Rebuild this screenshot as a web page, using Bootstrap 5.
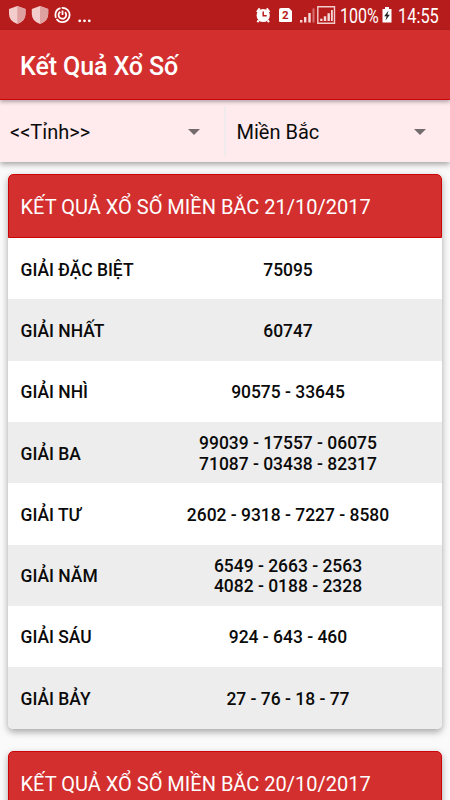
<!DOCTYPE html>
<html lang="vi">
<head>
<meta charset="utf-8">
<meta name="viewport" content="width=device-width, initial-scale=1">
<title>Kết Quả Xổ Số</title>
<link href="https://cdn.jsdelivr.net/npm/bootstrap@5.3.0/dist/css/bootstrap.min.css" rel="stylesheet">
<style>
body{font-family:Roboto,"Noto Sans",sans-serif;background:#fafafa;color:#0a0a0a;height:800px;overflow:hidden}
.status{height:30px;background:#b71c1c;font-size:19.3px;line-height:30px;padding-left:8px;padding-right:11px}
.status svg{display:block;flex:none}
.pct,.batt,.time{flex:none;white-space:nowrap}
.pct{width:40px}
.batt{margin:0 6px 0 2px}
.time{width:41px}
.pct span,.time span{display:block;transform-origin:left center;transform:scaleX(.85);padding-top:3px}
.pct span{transform:scaleX(.83)}
.appbar{height:70px;background:#d32f2f;border-bottom:1px solid #cc0508;padding:4px 20px 0;font-size:25px;font-weight:500;letter-spacing:-.1px;box-shadow:0 2px 4px rgba(0,0,0,.3);position:relative;z-index:2}
.filters{height:62px;background:#ffebee;box-shadow:0 2px 6px rgba(0,0,0,.38);position:relative;z-index:1;font-size:20px}
.filter-a{width:224px;padding:2px 24px 0 10px}
.filter-b{padding:2px 24px 0 10.5px}
.split{width:2px;background:#f1eaec;margin:6px 0}
.result{margin:0 8px 22.4px;border:0;border-radius:5px;box-shadow:0 3px 7px rgba(0,0,0,.34);overflow:hidden}
.result-title{height:64px;background:#d32f2f;border:1px solid #cc0508;border-radius:5px 5px 0 0;color:#fff;font-size:20.03px;padding:2px 12px 0 11.5px}
.prize{height:61.32px;font-size:17.45px;line-height:20.5px;font-weight:500;padding:2.4px 0 0 12.5px}
.prize:nth-child(odd){background:#ededed}
.prize-name{width:112.5px;flex:none;white-space:nowrap}
.prize-num{width:310px;flex:none}
</style>
<script src="https://cdn.jsdelivr.net/npm/bootstrap@5.3.0/dist/js/bootstrap.bundle.min.js"></script>
</head>
<body>
<div class="status d-flex align-items-center text-white">
  <svg width="70" height="30" viewBox="0 0 70 30">
    <g fill="#f3cccc"><path d="M9.3 6 17.5 9V14Q17.5 21 9.3 24Q1 21 1 14V9Z"/><path d="M32 6 40.2 9V14Q40.2 21 32 24Q23.8 21 23.8 14V9Z"/></g>
    <g fill="#dfa0a0"><path d="M9.3 6 17.5 9V14Q17.5 21 9.3 24Z"/><path d="M32 6 40.2 9V14Q40.2 21 32 24Z"/></g>
    <g fill="none" stroke="#fff"><circle cx="54.5" cy="15" r="7.1" stroke-width="1.8" stroke-dasharray="18 1.2 12 1.2"/><path d="M52.4 11.7A3.8 3.8 0 1 0 57 12.2M54.5 10.5V15" stroke-width="1.8"/></g>
  </svg>
  <svg width="15" height="30" viewBox="0 0 15 30" fill="#fff"><circle cx="1.7" cy="20.8" r="1.4"/><circle cx="6.5" cy="20.8" r="1.4"/><circle cx="11.3" cy="20.8" r="1.4"/></svg>
  <svg class="ms-auto" width="84" height="30" viewBox="256 0 84 30">
    <circle cx="263.2" cy="15.5" r="6.6" fill="#fff"/><g fill="none" stroke="#fff" stroke-width="2"><path d="M256.9 12 259.7 8.3M269.5 12 266.7 8.3M258.7 20.4 257.4 22.2M267.7 20.4 269 22.2"/></g><path d="M263.2 11.5V15.7H266.7" fill="none" stroke="#b71c1c" stroke-width="1.5"/>
    <path d="M281 8H289L292 11V21Q292 22 291 22H280Q279 22 279 21V10Q279 8 281 8Z" fill="#fff"/><text x="285.4" y="19.4" text-anchor="middle" font-size="11.5" font-weight="700" fill="#b71c1c">2</text>
    <g fill="#f6d9d9"><path d="M300 20h2.4v2.5H300zM304 17h2.4v5.5H304zM308.3 13h2.4v9.5h-2.4z"/><path d="M312.5 8.5h2v14h-2z" opacity=".45"/><path d="M320.2 18.7h2.3v2.3h-2.3zM323.8 16.2h2.4V21h-2.4zM327.5 13.2h2.4V21h-2.4zM331 10h1.8v11H331z"/></g><path d="M317.8 6.8H334.5V23.2H317.8Z" fill="none" stroke="#f3cccc" stroke-width="1.4"/>
  </svg>
  <span class="pct"><span>100%</span></span>
  <svg class="batt" width="10" height="30" viewBox="0 0 10 30"><path d="M3 7H7V9H9.5V22.5H.5V9H3Z" fill="#fff"/><path d="M6.5 10.5 2.2 16.2H4.6L3.5 20.5 7.8 14.7H5.4Z" fill="#222"/></svg>
  <span class="time"><span>14:55</span></span>
</div>
<header class="appbar d-flex align-items-center text-white">Kết Quả Xổ Số</header>
<div class="filters d-flex">
  <div class="filter-a d-flex align-items-center justify-content-between"><span>&lt;&lt;Tỉnh&gt;&gt;</span><svg width="12" height="6"><path d="M0 0H12L6 6Z" fill="#746b6d"/></svg></div>
  <div class="split"></div>
  <div class="filter-b d-flex flex-fill align-items-center justify-content-between"><span>Miền Bắc</span><svg width="12" height="6"><path d="M0 0H12L6 6Z" fill="#746b6d"/></svg></div>
</div>
<main class="pt-2 mt-1">
  <section class="card result">
    <div class="result-title d-flex align-items-center">KẾT QUẢ XỔ SỐ MIỀN BẮC 21/10/2017</div>
    <div class="prize d-flex align-items-center"><span class="prize-name">GIẢI ĐẶC BIỆT</span><span class="prize-num text-center">75095</span></div>
    <div class="prize d-flex align-items-center"><span class="prize-name">GIẢI NHẤT</span><span class="prize-num text-center">60747</span></div>
    <div class="prize d-flex align-items-center"><span class="prize-name">GIẢI NHÌ</span><span class="prize-num text-center">90575 - 33645</span></div>
    <div class="prize d-flex align-items-center"><span class="prize-name">GIẢI BA</span><span class="prize-num text-center">99039 - 17557 - 06075<br>71087 - 03438 - 82317</span></div>
    <div class="prize d-flex align-items-center"><span class="prize-name">GIẢI TƯ</span><span class="prize-num text-center">2602 - 9318 - 7227 - 8580</span></div>
    <div class="prize d-flex align-items-center"><span class="prize-name">GIẢI NĂM</span><span class="prize-num text-center">6549 - 2663 - 2563<br>4082 - 0188 - 2328</span></div>
    <div class="prize d-flex align-items-center"><span class="prize-name">GIẢI SÁU</span><span class="prize-num text-center">924 - 643 - 460</span></div>
    <div class="prize d-flex align-items-center"><span class="prize-name">GIẢI BẢY</span><span class="prize-num text-center">27 - 76 - 18 - 77</span></div>
  </section>
  <section class="card result">
    <div class="result-title d-flex align-items-center">KẾT QUẢ XỔ SỐ MIỀN BẮC 20/10/2017</div>
  </section>
</main>
</body>
</html>
